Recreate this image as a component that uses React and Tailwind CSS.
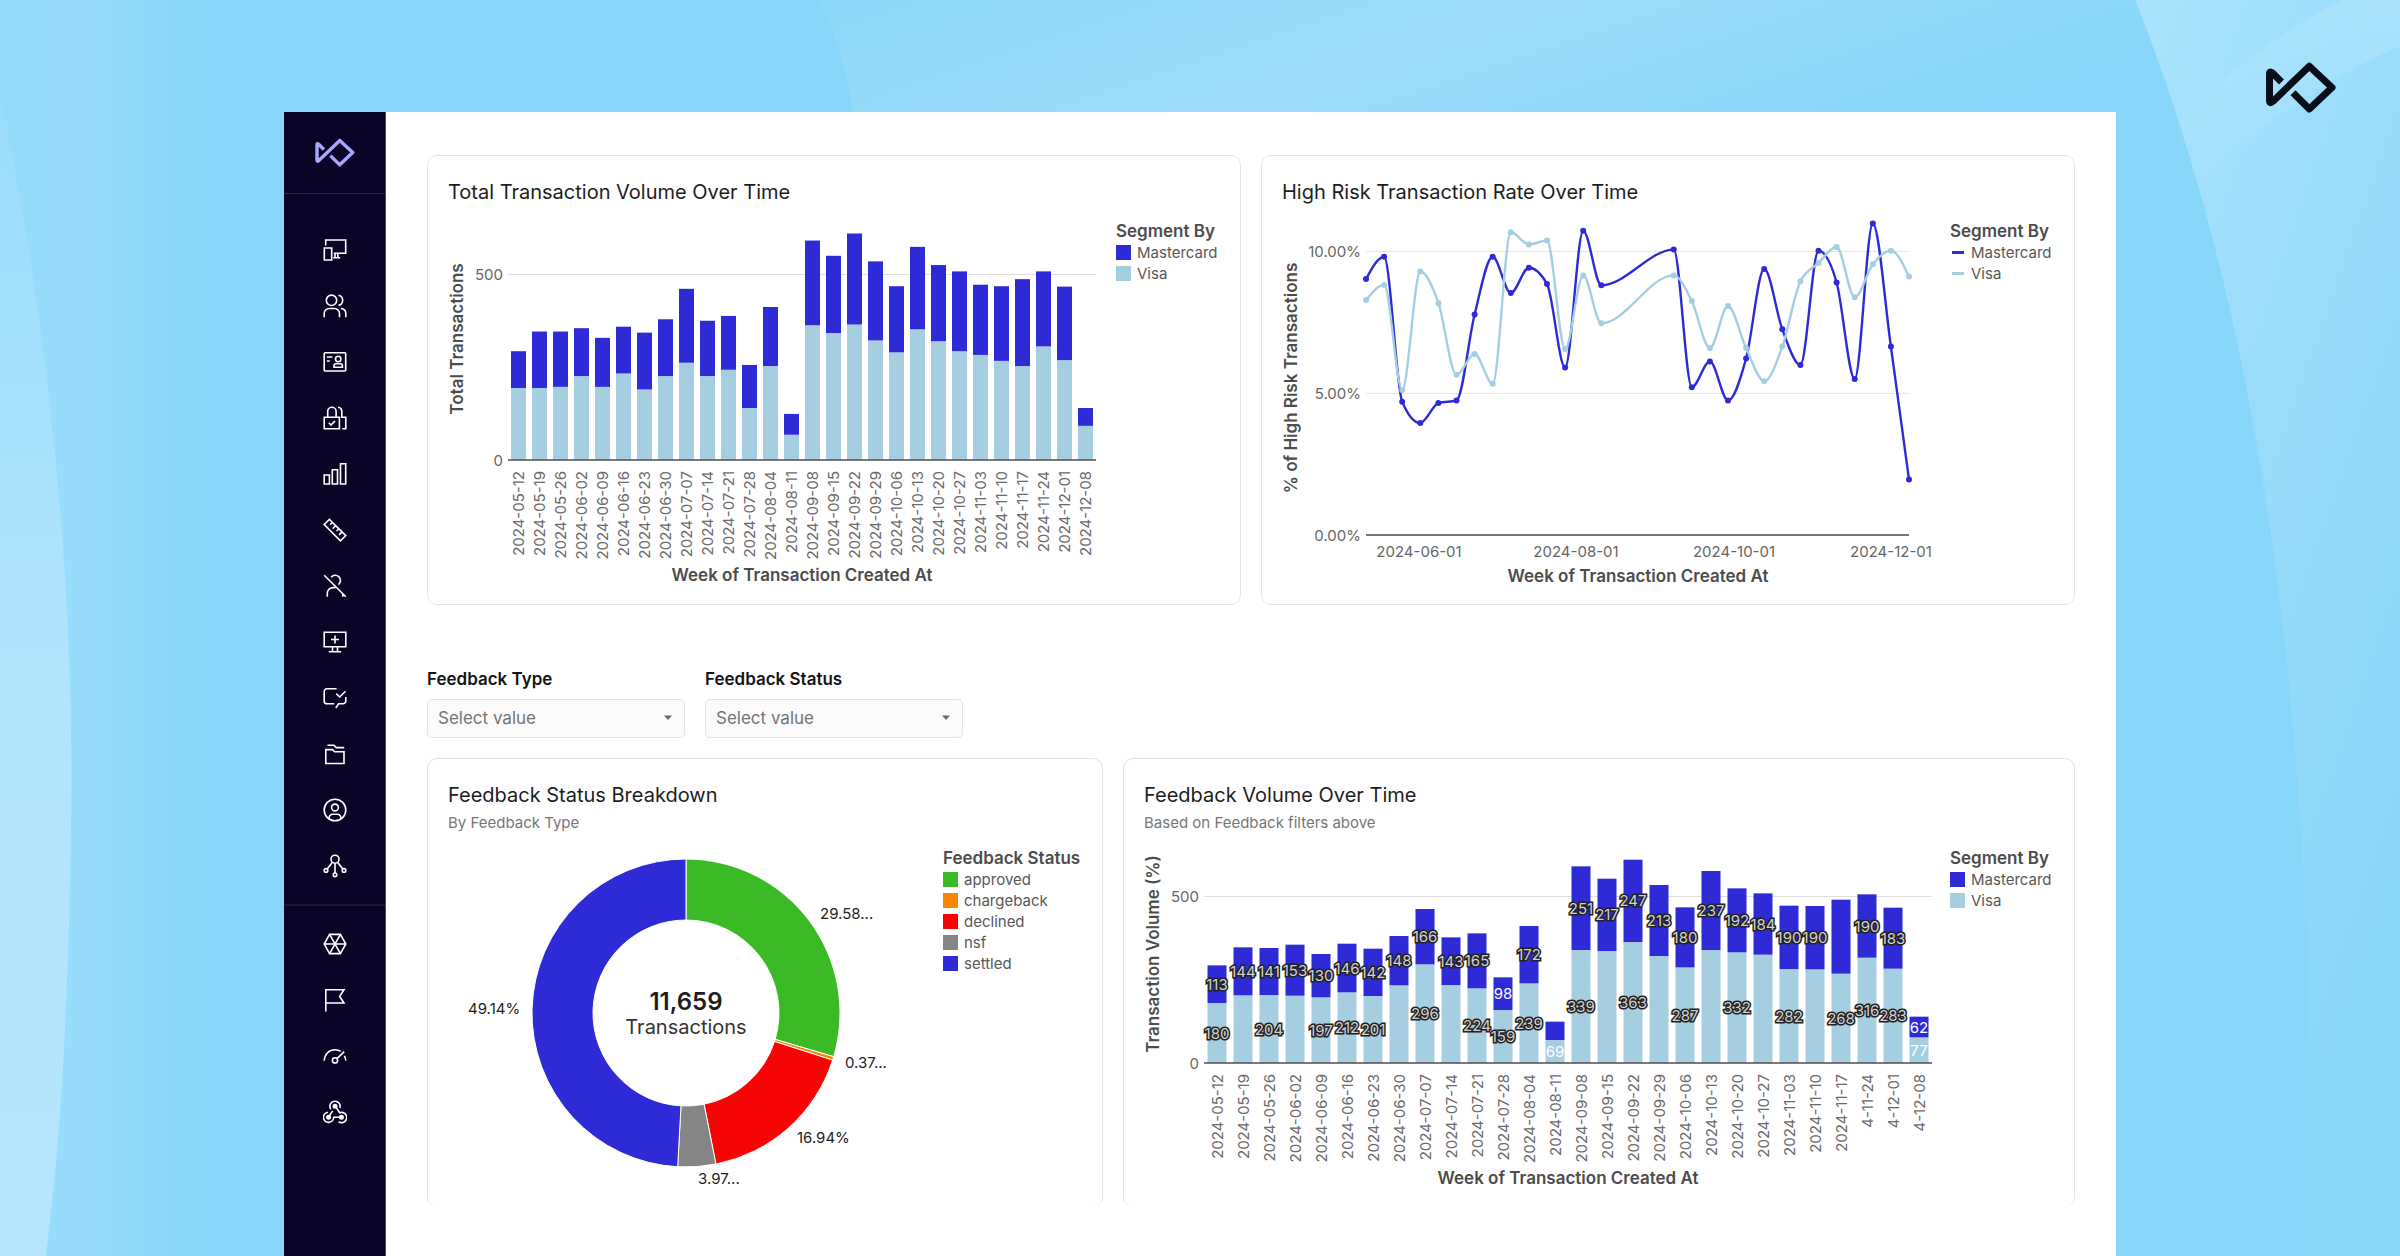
// src/App.jsx

const MASTERCARD = "#2e2ad6";
const VISA = "#a6cee1";

// Sundays between the two dates; three weeks of August/September have no data
const WEEKS = [
  "2024-05-12", "2024-05-19", "2024-05-26", "2024-06-02", "2024-06-09",
  "2024-06-16", "2024-06-23", "2024-06-30", "2024-07-07", "2024-07-14",
  "2024-07-21", "2024-07-28", "2024-08-04", "2024-08-11", "2024-09-08",
  "2024-09-15", "2024-09-22", "2024-09-29", "2024-10-06", "2024-10-13",
  "2024-10-20", "2024-10-27", "2024-11-03", "2024-11-10", "2024-11-17",
  "2024-11-24", "2024-12-01", "2024-12-08",
];

const FEEDBACK_WEEKS = [...WEEKS.slice(0, 25), "4-11-24", "4-12-01", "4-12-08"];

// [visa, mastercard]
const TRANSACTIONS = [
  [194, 99], [194, 152], [197, 149], [226, 129], [197, 132], [233, 126],
  [190, 153], [226, 153], [262, 199], [226, 149], [243, 145], [140, 116],
  [253, 159], [68, 56], [363, 228], [342, 208], [365, 245], [322, 213],
  [290, 178], [352, 222], [320, 205], [293, 215], [283, 189], [267, 201],
  [253, 234], [306, 202], [269, 198], [92, 48],
];

// [visa, mastercard, show visa label, show mastercard label]
const FEEDBACK = [
  [180, 113, 1, 1], [203, 144, 0, 1], [204, 141, 1, 1], [202, 153, 0, 1],
  [197, 130, 1, 1], [212, 146, 1, 1], [201, 142, 1, 1], [233, 148, 0, 1],
  [296, 166, 1, 1], [234, 143, 0, 1], [224, 165, 1, 1], [159, 98, 1, 1],
  [239, 172, 1, 1], [69, 55, 1, 0], [339, 251, 1, 1], [336, 217, 0, 1],
  [363, 247, 1, 1], [321, 213, 0, 1], [287, 180, 1, 1], [339, 237, 0, 1],
  [332, 192, 1, 1], [325, 184, 0, 1], [282, 190, 1, 1], [281, 190, 0, 1],
  [268, 222, 1, 0], [316, 190, 1, 1], [283, 183, 1, 1], [77, 62, 1, 1],
];

const MASTERCARD_RATE = [
  9.02, 9.81, 4.7, 3.95, 4.65, 4.74, 7.77, 9.81, 8.53, 9.42, 8.85, 5.9, 10.72,
  8.8, 10.06, 5.21, 6.12, 4.74, 6.22, 9.38, 7.25, 5.99, 10.02, 8.9, 5.5, 10.98,
  6.64, 1.96,
];

const VISA_RATE = [
  8.28, 8.81, 5.11, 9.29, 8.17, 5.65, 6.38, 5.33, 10.67, 10.24, 10.38, 6.56,
  9.15, 7.46, 9.15, 8.25, 6.59, 8.07, 6.59, 5.42, 6.64, 8.94, 9.59, 10.15,
  8.38, 9.54, 10.02, 9.11,
];

const STATUSES = [
  { name: "approved", value: 29.58, color: "#3aba24", label: "29.58...", x: 372, y: 78 },
  { name: "chargeback", value: 0.37, color: "#fb8500", label: "0.37...", x: 397, y: 227 },
  { name: "declined", value: 16.94, color: "#f70404", label: "16.94%", x: 349, y: 302 },
  { name: "nsf", value: 3.97, color: "#858585", label: "3.97...", x: 250, y: 343 },
  { name: "settled", value: 49.14, color: MASTERCARD, label: "49.14%", x: 20, y: 173 },
];

const SEGMENTS = [
  { name: "Mastercard", color: MASTERCARD },
  { name: "Visa", color: VISA },
];

export default function App() {
  return (
    <div className="relative min-h-screen bg-[#86d7f9] font-['Inter',sans-serif]">
      <Backdrop />
      <Logo className="absolute top-[62px] right-16 w-[70px] text-[#0a0d1c]" strokeWidth={7} />

      <div className="relative min-h-screen px-[284px] pt-28 flex">
        <Sidebar />
        <main className="flex-1 min-w-0 bg-white px-[41px] pt-[43px]">
          <div className="grid grid-cols-2 gap-5">
            <Card title="Total Transaction Volume Over Time" legend={<Legend title="Segment By" items={SEGMENTS} />}>
              <BarChart
                data={TRANSACTIONS}
                weeks={WEEKS}
                yTitle="Total Transactions"
                width={652}
                height={396}
                zero={252}
                perUnit={0.3713}
                step={21}
                barWidth={15}
                yTitleAt={131}
                xTitleAt={367}
              />
            </Card>
            <Card title="High Risk Transaction Rate Over Time" legend={<Legend title="Segment By" items={SEGMENTS} line />}>
              <RateChart />
            </Card>
          </div>

          <div className="mt-[62px] flex gap-5">
            <Filter id="feedback-type" label="Feedback Type" />
            <Filter id="feedback-status" label="Feedback Status" />
          </div>

          <div className="mt-5 grid grid-cols-[169fr_238fr] gap-5">
            <Card
              title="Feedback Status Breakdown"
              subtitle="By Feedback Type"
              legend={<Legend title="Feedback Status" items={STATUSES} />}
            >
              <Donut />
            </Card>
            <Card
              title="Feedback Volume Over Time"
              subtitle="Based on Feedback filters above"
              legend={<Legend title="Segment By" items={SEGMENTS} />}
            >
              <BarChart
                data={FEEDBACK}
                weeks={FEEDBACK_WEEKS}
                yTitle="Transaction Volume (%)"
                width={790}
                height={372}
                zero={228}
                perUnit={0.3333}
                step={26}
                barWidth={19}
                yTitleAt={119}
                xTitleAt={343}
                labels
              />
            </Card>
          </div>
        </main>
      </div>
    </div>
  );
}

function Card({ title, subtitle, legend, children }) {
  return (
    <section
      className={`border-[#e4e4e4] rounded-[10px] px-5 pt-5 ${subtitle ? "border-x border-t" : "border"}`}
    >
      <h2 className="text-xl leading-8 text-[#1d1d1d]">{title}</h2>
      {subtitle && <p className="text-[15px] leading-6 text-[#777777]">{subtitle}</p>}
      <div className="flex gap-4 items-start">
        <div className="flex-1 min-w-0">{children}</div>
        {legend}
      </div>
    </section>
  );
}

function Legend({ title, items, line }) {
  return (
    <div className={`shrink-0 pt-[13px] ${items.length > 2 ? "w-[139px]" : "w-[104px]"}`}>
      <p className="text-[17px] leading-[21px] font-semibold text-[#4c4c4c] whitespace-nowrap">{title}</p>
      <ul>
        {items.map((item) => (
          <li key={item.name} className="flex items-center gap-1.5 text-[15px] leading-[21px] text-[#585858]">
            <span className="w-[15px] flex justify-center">
              <span
                className={line ? "w-3 h-[3px]" : "w-[15px] h-[15px]"}
                style={{ backgroundColor: item.color }}
              />
            </span>
            {item.name}
          </li>
        ))}
      </ul>
    </div>
  );
}

function Filter({ id, label }) {
  return (
    <div className="w-[258px]">
      <label htmlFor={id} className="block mb-2 text-[17px] leading-6 font-semibold text-[#141414]">
        {label}
      </label>
      <div className="relative">
        <select
          id={id}
          className="appearance-none block w-full h-[39px] px-2.5 rounded-[5px] border border-[#e2e2e2] bg-[#fbfbfb] text-[17px] text-[#747474]"
        >
          <option>Select value</option>
        </select>
        <svg viewBox="0 0 10 6" className="absolute right-3 top-4 w-[10px] h-[6px] pointer-events-none">
          <path d="M1 0.5h8L5 5z" fill="#6b6b6b" />
        </svg>
      </div>
    </div>
  );
}

function AxisTitle({ x, y, rotate, children }) {
  return (
    <text
      transform={`translate(${x} ${y})${rotate ? " rotate(-90)" : ""}`}
      textAnchor="middle"
      dominantBaseline="central"
      className="text-[17px] font-semibold fill-[#4c4c4c]"
    >
      {children}
    </text>
  );
}

function BarChart({
  data, weeks, yTitle, width, height, zero, perUnit, step, barWidth, yTitleAt, xTitleAt, labels,
}) {
  const left = 60;
  const right = left + step * data.length;
  const y500 = Math.round(zero - 500 * perUnit);

  return (
    <svg viewBox={`0 0 ${width} ${height}`} className="block w-full">
      <line x1={left} x2={right} y1={y500 + 0.5} y2={y500 + 0.5} stroke="#e0e0e0" />
      {[[500, y500], [0, zero]].map(([tick, y]) => (
        <text key={tick} x="55" y={y} textAnchor="end" dominantBaseline="central" className="text-[15px] fill-[#666666]">
          {tick}
        </text>
      ))}

      {data.map(([visa, mc], i) => {
        const x = left + step * i + (step - barWidth) / 2;
        return (
          <g key={weeks[i]}>
            <rect x={x} width={barWidth} y={zero - visa * perUnit} height={visa * perUnit} fill={VISA} />
            <rect x={x} width={barWidth} y={zero - (visa + mc) * perUnit} height={mc * perUnit} fill={MASTERCARD} />
            <text
              transform={`translate(${x + barWidth / 2} ${zero + 11}) rotate(-90)`}
              textAnchor="end"
              dominantBaseline="central"
              className="text-[15px] fill-[#6b6b6b]"
            >
              {weeks[i]}
            </text>
          </g>
        );
      })}

      {labels &&
        data.map(([visa, mc, showVisa, showMc], i) => {
          const x = left + step * (i + 0.5);
          return (
            <g key={weeks[i]}>
              {showVisa === 1 && <BarLabel x={x} y={zero - (visa * perUnit) / 2} value={visa} />}
              {showMc === 1 && <BarLabel x={x} y={zero - (visa + mc / 2) * perUnit} value={mc} />}
            </g>
          );
        })}

      <line x1={left} x2={right} y1={zero} y2={zero} stroke="#4d4d4d" strokeWidth="1.5" />
      <AxisTitle x={9} y={yTitleAt} rotate>{yTitle}</AxisTitle>
      <AxisTitle x={(left + right) / 2} y={xTitleAt}>Week of Transaction Created At</AxisTitle>
    </svg>
  );
}

// Labels wider than their bar get a dark halo so they stay readable
function BarLabel({ x, y, value }) {
  return (
    <text
      x={x}
      y={y}
      textAnchor="middle"
      dominantBaseline="central"
      className={
        value > 99
          ? "text-[15px] fill-[#d2d2d2] stroke-[#222222] stroke-3 [paint-order:stroke]"
          : "text-[15px] fill-white"
      }
    >
      {value}
    </text>
  );
}

// Monotone cubic interpolation
function smoothPath(points) {
  const n = points.length;
  const h = [];
  const s = [];
  for (let i = 0; i < n - 1; i++) {
    h.push(points[i + 1][0] - points[i][0]);
    s.push((points[i + 1][1] - points[i][1]) / h[i]);
  }
  const t = points.map((_, i) => {
    if (i === 0 || i === n - 1) return 0;
    const p = (s[i - 1] * h[i] + s[i] * h[i - 1]) / (h[i - 1] + h[i]);
    return (
      (Math.sign(s[i - 1]) + Math.sign(s[i])) *
      Math.min(Math.abs(s[i - 1]), Math.abs(s[i]), 0.5 * Math.abs(p))
    );
  });
  t[0] = (3 * s[0] - t[1]) / 2;
  t[n - 1] = (3 * s[n - 2] - t[n - 2]) / 2;

  let d = `M${points[0][0]} ${points[0][1]}`;
  for (let i = 0; i < n - 1; i++) {
    const [x0, y0] = points[i];
    const [x1, y1] = points[i + 1];
    const dx = h[i] / 3;
    d += `C${x0 + dx} ${y0 + dx * t[i]} ${x1 - dx} ${y1 - dx * t[i + 1]} ${x1} ${y1}`;
  }
  return d;
}

function RateChart() {
  const left = 84;
  const right = 627;
  const zero = 327;
  const toPoints = (rates) =>
    rates.map((rate, i) => {
      const week = i < 14 ? i : i + 3;
      return [left + (week * (right - left)) / 30, zero - rate * 28.37];
    });

  return (
    <svg viewBox="0 0 652 396" className="block w-full">
      {[["10.00%", 43], ["5.00%", 185], ["0.00%", 327]].map(([tick, y]) => (
        <g key={tick}>
          <line x1={left} x2={right} y1={y + 0.5} y2={y + 0.5} stroke="#e6e6e6" />
          <text x="79" y={y} textAnchor="end" dominantBaseline="central" className="text-[15px] fill-[#666666]">
            {tick}
          </text>
        </g>
      ))}
      <line x1={left} x2={right} y1={zero} y2={zero} stroke="#4d4d4d" strokeWidth="1.5" />
      {[["2024-06-01", 137], ["2024-08-01", 294], ["2024-10-01", 452], ["2024-12-01", 609]].map(([tick, x]) => (
        <text key={tick} x={x} y="343" textAnchor="middle" dominantBaseline="central" className="text-[15px] fill-[#666666]">
          {tick}
        </text>
      ))}

      {[[MASTERCARD_RATE, MASTERCARD], [VISA_RATE, VISA]].map(([rates, color]) => {
        const points = toPoints(rates);
        return (
          <g key={color}>
            <path d={smoothPath(points)} fill="none" stroke={color} strokeWidth="2.4" />
            {points.map(([x, y]) => (
              <circle key={x} cx={x} cy={y} r="3" fill={color} />
            ))}
          </g>
        );
      })}

      <AxisTitle x={9} y={170} rotate>% of High Risk Transactions</AxisTitle>
      <AxisTitle x={356} y={368}>Week of Transaction Created At</AxisTitle>
    </svg>
  );
}

function Donut() {
  const cx = 238;
  const cy = 178;
  const at = (share, r) => {
    const a = (share / 100) * 2 * Math.PI;
    return `${cx + r * Math.sin(a)} ${cy - r * Math.cos(a)}`;
  };
  let sum = 0;
  const slices = STATUSES.map((s) => {
    const from = sum;
    sum += s.value;
    return { ...s, from, to: sum };
  });

  return (
    <svg viewBox="0 0 479 372" className="block w-full">
      {slices.map(({ name, color, from, to }) => (
        <path
          key={name}
          d={`M${at(from, 154)}A154 154 0 0 1 ${at(to, 154)}L${at(to, 93)}A93 93 0 0 0 ${at(from, 93)}Z`}
          fill={color}
          stroke="#ffffff"
          strokeWidth="1"
        />
      ))}
      {slices.map(({ name, label, x, y }) => (
        <text key={name} x={x} y={y} dominantBaseline="central" className="text-[15px] fill-[#1d1d1d]">
          {label}
        </text>
      ))}
      <text x={cx} y="166" textAnchor="middle" dominantBaseline="central" className="text-2xl font-semibold fill-[#1d1d1d]">
        11,659
      </text>
      <text x={cx} y="192" textAnchor="middle" dominantBaseline="central" className="text-xl fill-[#333333]">
        Transactions
      </text>
    </svg>
  );
}

const MAIN_NAV = [
  {
    name: "Devices",
    icon: <path d="M2.7 7.5V2h20v13.2H10.8M12 15.2v4.6M14.8 15.2v4.6M10.2 19.8h7M1.3 10h7.4v12H1.3z" />,
  },
  {
    name: "Users",
    icon: (
      <>
        <circle cx="8.5" cy="6.3" r="5.2" />
        <path d="M1.2 23.2v-3.7a5 5 0 0 1 5-5h5.3a5 5 0 0 1 5 5v3.7M15.5 1.2a5.2 5.2 0 0 1 0 10.2M18 14.5c3 .3 4.8 2.2 4.8 5v3.7" />
      </>
    ),
  },
  {
    name: "Identities",
    icon: (
      <>
        <rect x="1.2" y="2.8" width="21.5" height="18.2" rx="1" />
        <circle cx="15.2" cy="9" r="2.7" />
        <path d="M3.8 7h5.6M3.8 11h3M11 17.2v-1.4a2 2 0 0 1 2-2h4.4a2 2 0 0 1 2 2v1.4z" />
      </>
    ),
  },
  {
    name: "Security",
    icon: (
      <path d="M1.2 11.3h15.2v11.5H1.2zM4.7 11.3V5.5a4.2 4.2 0 0 1 8.4 0v5.8M5.8 16.8l2.2 2.2 4-4M15 1.3a4.2 4.2 0 0 1 3.8 4.2v5.8h4v11.5h-3.6" />
    ),
  },
  {
    name: "Reports",
    icon: <path d="M1.2 13h5.2v9H1.2zM9.3 7.8h5.2V22H9.3zM17.5 1.7h5.2V22h-5.2z" />,
  },
  {
    name: "Rules",
    icon: <path d="M1.2 6.6l5.2-5.2L22.8 17.6l-5.4 5.2zM9.4 4.4L7.2 6.6M12.6 7.6l-3 3M15.8 10.8l-2.2 2.2M19 13.9l-3 3" />,
  },
  {
    name: "Blocked users",
    icon: <path d="M1.2 1.2l21.6 21.6M8.2 3.2a5.2 5.2 0 1 1 7.2 7.4M4.3 22.8v-3.4a5.8 5.8 0 0 1 5.8-5.8h2.4M19.8 19.5v3.3" />,
  },
  {
    name: "Add monitor",
    icon: <path d="M1.2 2.2h21.6v14.6H1.2zM12 5.5v8M8 9.5h8M9.5 16.8v4.8M14.5 16.8v4.8M5.8 21.8h12.4" />,
  },
  {
    name: "Feedback",
    icon: (
      <path d="M13.6 2.8H4a2.8 2.8 0 0 0-2.8 2.8v9.3A2.8 2.8 0 0 0 4 17.7h7.2M13.2 7.6l3.5 3.4 5.8-5.8M12.8 22l2.8-4.3h4.2a2.8 2.8 0 0 0 3-2.8v-3.8" />
    ),
  },
  {
    name: "Cases",
    icon: <path d="M2.8 7.6h6.5l2.4 2.2H21v11.7H2.8zM4.4 3.2h6.4l2.6 2.4h7.8" />,
  },
  {
    name: "Account",
    icon: (
      <>
        <circle cx="12" cy="12" r="10.8" />
        <circle cx="12" cy="9.5" r="3.4" />
        <path d="M6.2 21v-1.4a3.4 3.4 0 0 1 3.4-3.4h4.8a3.4 3.4 0 0 1 3.4 3.4V21" />
      </>
    ),
  },
  {
    name: "Connections",
    icon: (
      <>
        <circle cx="12" cy="5.2" r="4" />
        <circle cx="3" cy="16.4" r="1.8" />
        <circle cx="12" cy="20.8" r="1.8" />
        <circle cx="21" cy="16.4" r="1.8" />
        <path d="M9.4 8.3l-5.2 6.6M12 9.2V19M14.6 8.3l5.2 6.6" />
      </>
    ),
  },
];

const TOOLS_NAV = [
  {
    name: "Network",
    icon: <path d="M1.2 12L6.6 2.4h10.8L22.8 12l-5.4 9.6H6.6zM1.2 12h21.6M6.6 2.4l10.8 19.2M17.4 2.4L6.6 21.6" />,
  },
  { name: "Flags", icon: <path d="M2.8 23.4V1.8H21l-4.4 6.6L21 15H2.8" /> },
  {
    name: "Performance",
    icon: (
      <>
        <circle cx="12" cy="16.4" r="2.6" />
        <path d="M1.2 16.8C1.6 10.2 6 5.7 12 5.7c2.2 0 4.2.6 5.8 1.7M14 14.6l7.2-7M21.4 11.8c.8 1.5 1.3 3.2 1.4 5" />
      </>
    ),
  },
  {
    name: "Webhooks",
    icon: (
      <>
        <g fill="currentColor" stroke="none">
          <circle cx="12" cy="6.2" r="2.5" />
          <circle cx="5.6" cy="17.2" r="2.5" />
          <circle cx="18.4" cy="17.2" r="2.5" />
        </g>
        <path d="M7.8 9.2a5.1 5.1 0 1 1 9-1.2M12.6 6.6l4 6.2a5.1 5.1 0 1 1-1 8.8M5.6 17.2l4-6.4M18.4 17.2h-7.7a5.1 5.1 0 1 1-5.7-5" />
      </>
    ),
  },
];

function NavList({ items }) {
  return (
    <ul>
      {items.map(({ name, icon }) => (
        <li key={name}>
          <a href="#" aria-label={name} className="h-14 flex items-center justify-center text-white">
            <svg viewBox="0 0 24 24" className="w-6 h-6" fill="none" stroke="currentColor" strokeWidth="1.6">
              {icon}
            </svg>
          </a>
        </li>
      ))}
    </ul>
  );
}

function Sidebar() {
  return (
    <nav className="w-[102px] shrink-0 bg-[#0a0526] border-r border-[#4b4763]">
      <div className="h-[82px] flex items-center justify-center border-b border-[#2b2745]">
        <Logo className="w-10 text-[#aaa6fb]" strokeWidth={6} />
      </div>
      <div className="pt-7 pb-2.5 border-b-2 border-[#1d1936]">
        <NavList items={MAIN_NAV} />
      </div>
      <div className="pt-2.5">
        <NavList items={TOOLS_NAV} />
      </div>
    </nav>
  );
}

function Logo({ className, strokeWidth }) {
  return (
    <svg viewBox="0 0 70 51" className={className} fill="none" stroke="currentColor" strokeWidth={strokeWidth} strokeLinejoin="round">
      <path d="M15.5 20L6.5 11Q3.5 8.5 3.5 12V38Q3.5 42.5 6.8 39.5L43.3 4.2L66 25.500L43.3 47L27 30.8" />
    </svg>
  );
}

// Soft light ribbons behind the window
function Backdrop() {
  return (
    <svg
      viewBox="0 0 1568 821"
      preserveAspectRatio="none"
      className="absolute inset-0 w-full h-full"
      aria-hidden="true"
    >
      <defs>
        <linearGradient id="left" x1="0" x2="1" y1="0" y2="0">
          <stop offset="0" stopColor="#94dbfa" />
          <stop offset="0.35" stopColor="#98dcfa" />
          <stop offset="0.9" stopColor="#86d7f9" />
        </linearGradient>
        <linearGradient id="edge" x1="0" x2="0" y1="0" y2="1">
          <stop offset="0" stopColor="#98dcfa" />
          <stop offset="0.5" stopColor="#b2e4fb" />
          <stop offset="1" stopColor="#b6e5fc" />
        </linearGradient>
        <linearGradient id="top" x1="0" x2="1" y1="0" y2="0.3">
          <stop offset="0" stopColor="#8dd9f9" />
          <stop offset="0.5" stopColor="#9cddfa" />
          <stop offset="1" stopColor="#86d7f9" />
        </linearGradient>
        <linearGradient id="right" x1="0" x2="0.6" y1="0" y2="1">
          <stop offset="0" stopColor="#aae3fb" />
          <stop offset="0.4" stopColor="#9bddfa" />
          <stop offset="1" stopColor="#88d7f9" />
        </linearGradient>
        <linearGradient id="ribbon" x1="1" x2="0" y1="0" y2="1">
          <stop offset="0" stopColor="#c0e9fc" stopOpacity="0.4" />
          <stop offset="1" stopColor="#c0e9fc" stopOpacity="0" />
        </linearGradient>
      </defs>
      <path d="M0 0H150V821H0z" fill="url(#left)" />
      <path d="M0 60C35 230 50 400 46 560C44 680 38 760 30 821H0z" fill="url(#edge)" />
      <path d="M535 0H1395C1410 30 1420 60 1428 90H560C556 60 548 25 535 0z" fill="url(#top)" />
      <path d="M1395 0H1568V821H1510C1512 520 1490 240 1395 0z" fill="url(#right)" />
      <path d="M1568 0V30C1500 60 1455 100 1432 130L1422 85C1450 50 1490 20 1530 0z" fill="url(#ribbon)" />
    </svg>
  );
}
